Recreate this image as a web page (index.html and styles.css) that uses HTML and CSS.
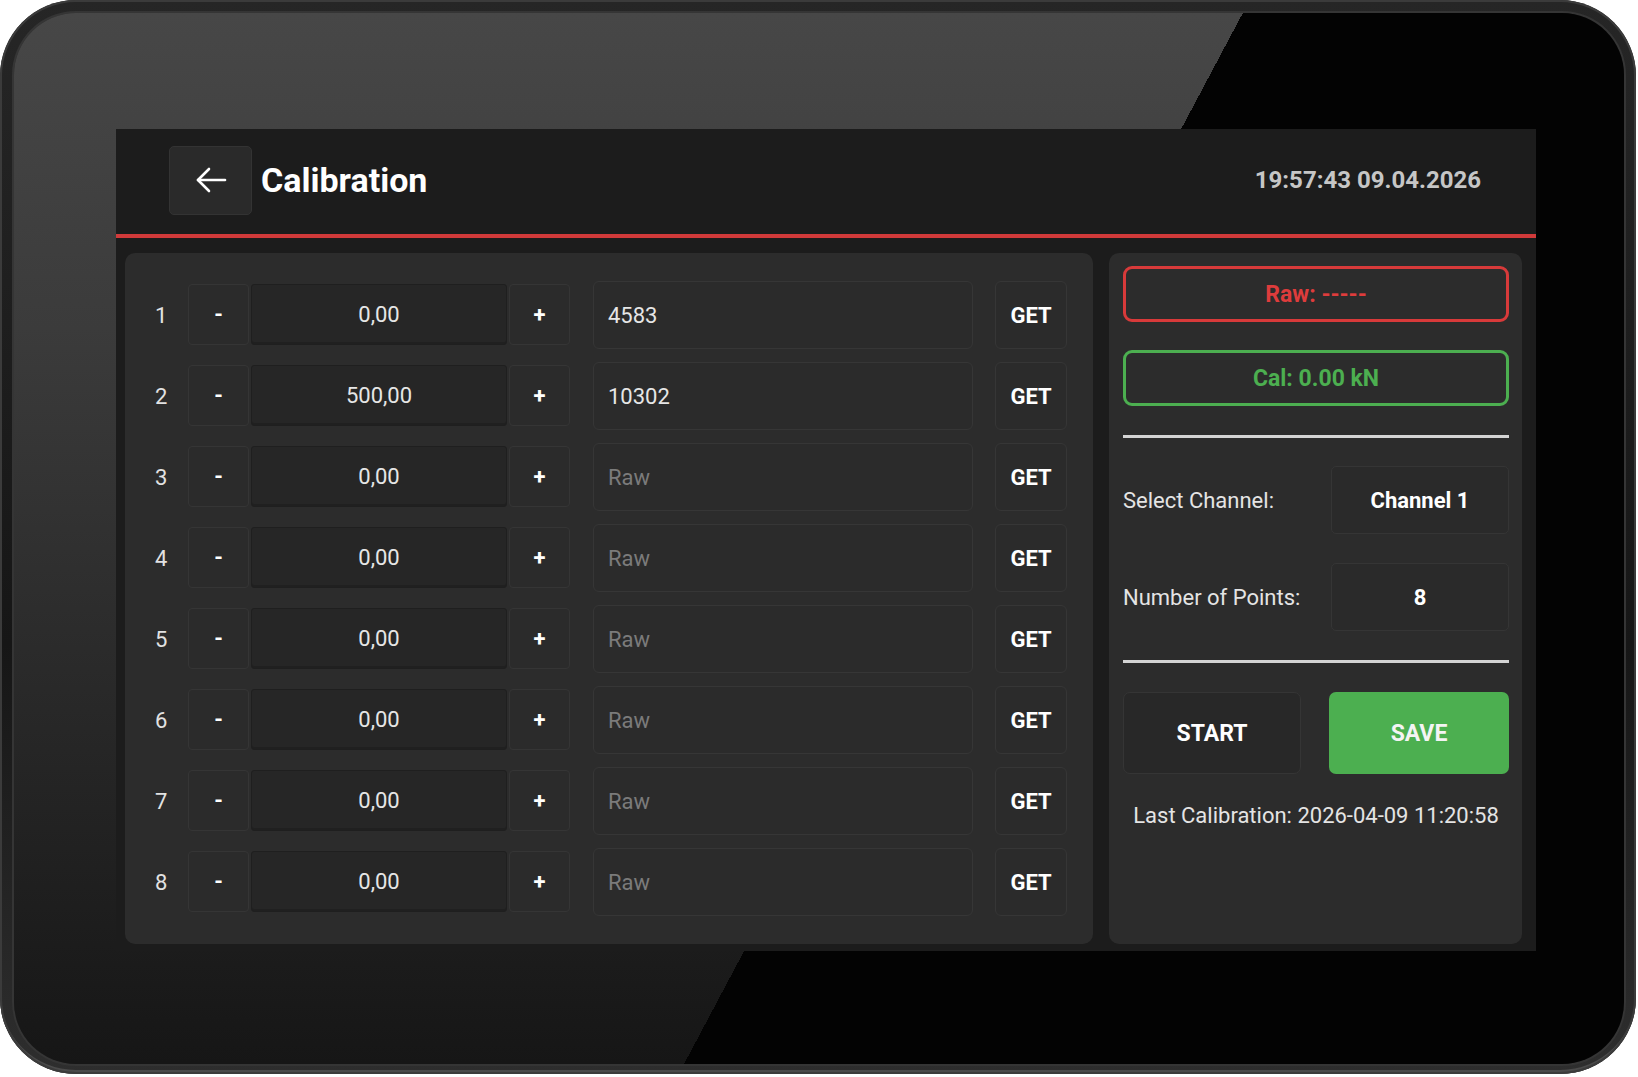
FILE: index.html
```html
<!DOCTYPE html>
<html lang="en">
<head>
<meta charset="utf-8">
<title>Calibration</title>
<link rel="stylesheet" href="styles.css">
</head>
<body>
<div class="device">
  <div class="glass">
    <div class="app">
      <header class="topbar">
        <button class="back" aria-label="Back">
          <svg width="32" height="26" viewBox="0 0 32 26" fill="none" stroke="#ffffff" stroke-width="2.6" stroke-linecap="round" stroke-linejoin="round">
            <path d="M30 13H3"/>
            <path d="M14 2L3 13L14 24"/>
          </svg>
        </button>
        <h1 class="title">Calibration</h1>
        <div class="clock">19:57:43 09.04.2026</div>
      </header>
      <main class="content">
        <section class="points">
          <div class="row"><span class="idx">1</span><div class="stepper"><button class="step">-</button><div class="value">0,00</div><button class="step">+</button></div><div class="raw">4583</div><button class="get">GET</button></div>
          <div class="row"><span class="idx">2</span><div class="stepper"><button class="step">-</button><div class="value">500,00</div><button class="step">+</button></div><div class="raw">10302</div><button class="get">GET</button></div>
          <div class="row"><span class="idx">3</span><div class="stepper"><button class="step">-</button><div class="value">0,00</div><button class="step">+</button></div><div class="raw empty">Raw</div><button class="get">GET</button></div>
          <div class="row"><span class="idx">4</span><div class="stepper"><button class="step">-</button><div class="value">0,00</div><button class="step">+</button></div><div class="raw empty">Raw</div><button class="get">GET</button></div>
          <div class="row"><span class="idx">5</span><div class="stepper"><button class="step">-</button><div class="value">0,00</div><button class="step">+</button></div><div class="raw empty">Raw</div><button class="get">GET</button></div>
          <div class="row"><span class="idx">6</span><div class="stepper"><button class="step">-</button><div class="value">0,00</div><button class="step">+</button></div><div class="raw empty">Raw</div><button class="get">GET</button></div>
          <div class="row"><span class="idx">7</span><div class="stepper"><button class="step">-</button><div class="value">0,00</div><button class="step">+</button></div><div class="raw empty">Raw</div><button class="get">GET</button></div>
          <div class="row"><span class="idx">8</span><div class="stepper"><button class="step">-</button><div class="value">0,00</div><button class="step">+</button></div><div class="raw empty">Raw</div><button class="get">GET</button></div>
        </section>
        <aside class="side">
          <div class="readout readout-raw">Raw: -----</div>
          <div class="readout readout-cal">Cal: 0.00 kN</div>
          <hr class="sep sep-first">
          <div class="setting setting-first">
            <span class="label">Select Channel:</span>
            <div class="pick">Channel 1</div>
          </div>
          <div class="setting">
            <span class="label">Number of Points:</span>
            <div class="pick">8</div>
          </div>
          <hr class="sep">
          <div class="actions">
            <button class="action start">START</button>
            <button class="action save">SAVE</button>
          </div>
          <div class="last">Last Calibration: 2026-04-09 11:20:58</div>
        </aside>
      </main>
    </div>
  </div>
</div>
</body>
</html>
```

FILE: styles.css
```css
* {
  box-sizing: border-box;
}

html, body {
  margin: 0;
  padding: 0;
  background: #ffffff;
}

body {
  width: 1638px;
  height: 1077px;
  overflow: hidden;
  font-family: Roboto, "Liberation Sans", Arial, sans-serif;
}

button {
  font-family: inherit;
  padding: 0;
  margin: 0;
  cursor: pointer;
}

.device {
  width: 1636px;
  height: 1074px;
  border-radius: 76px;
  padding: 13px 12px 10px 14px;
  background: linear-gradient(to bottom, #262626 0%, #161616 60%, #2e2e2e 100%);
  box-shadow: inset 0 0 0 2px #3b3b3b, inset 0 -4px 0 #4a4a4a;
}

.glass {
  width: 100%;
  height: 100%;
  border-radius: 62px;
  padding: 116px 0 0 102px;
  background:
    linear-gradient(118deg, rgba(0,0,0,0) 1085px, #030303 1085px),
    linear-gradient(to bottom, #474747 0%, #3b3b3b 30%, #262626 70%, #161616 100%);
  box-shadow: 0 0 0 2px #353535;
}

.app {
  width: 1420px;
  height: 822px;
  background: #1c1c1c;
  display: flex;
  flex-direction: column;
}

/* header */
.topbar {
  height: 109px;
  flex: none;
  display: flex;
  align-items: center;
  padding: 0 55px 3px 53px;
  border-bottom: 4px solid #d13a3a;
}

.back {
  width: 83px;
  height: 69px;
  border-radius: 5px;
  background: #2a2a2a;
  border: 1px solid #333333;
  display: flex;
  align-items: center;
  justify-content: center;
}

.title {
  margin: 0 0 0 9px;
  font-size: 34px;
  font-weight: 700;
  color: #ffffff;
  letter-spacing: 0;
}

.clock {
  margin-left: auto;
  font-size: 24px;
  font-weight: 700;
  color: #c6c6c6;
}

/* body */
.content {
  flex: 1;
  display: flex;
  gap: 16px;
  padding: 15px 14px 7px 9px;
}

.points {
  width: 968px;
  background: #2c2c2c;
  border-radius: 10px;
  display: flex;
  flex-direction: column;
  justify-content: center;
  gap: 13px;
  padding: 0 26px 0 30px;
}

.row {
  height: 68px;
  display: flex;
  align-items: center;
}

.idx {
  width: 33px;
  font-size: 22px;
  color: #e2e2e2;
}

.stepper {
  display: flex;
  gap: 2px;
  height: 61px;
  margin-top: -2px;
}

.step {
  width: 61px;
  height: 100%;
  background: #2b2b2b;
  border: 1px solid #353535;
  border-radius: 4px;
  color: #ffffff;
  font-size: 22px;
  font-weight: 700;
}

.value {
  width: 256px;
  height: 100%;
  background: #262626;
  border: 1px solid #1f1f1f;
  border-radius: 3px;
  box-shadow: inset 0 -2px 0 #202020;
  display: flex;
  align-items: center;
  justify-content: center;
  font-size: 22px;
  color: #e6e6e6;
}

.raw {
  width: 380px;
  height: 68px;
  margin-left: 23px;
  background: #2b2b2b;
  border: 1px solid #363636;
  border-radius: 6px;
  display: flex;
  align-items: center;
  padding-left: 14px;
  font-size: 22px;
  color: #e6e6e6;
}

.raw.empty {
  color: #7b7b7b;
}

.get {
  width: 72px;
  height: 68px;
  margin-left: 22px;
  background: #2b2b2b;
  border: 1px solid #363636;
  border-radius: 6px;
  color: #ffffff;
  font-size: 22px;
  font-weight: 700;
}

/* side panel */
.side {
  width: 413px;
  background: #2c2c2c;
  border-radius: 10px;
  padding: 13px 13px 0 14px;
  display: flex;
  flex-direction: column;
}

.readout {
  height: 56px;
  border: 3px solid;
  border-radius: 9px;
  display: flex;
  align-items: center;
  justify-content: center;
  font-size: 23px;
  font-weight: 700;
}

.readout-raw {
  border-color: #d83a3a;
  color: #de3c3c;
}

.readout-cal {
  margin-top: 28px;
  border-color: #4caf50;
  color: #4caf50;
}

.sep {
  margin: 29px 0 0;
  height: 3px;
  border: none;
  background: #d4d4d4;
}

.setting {
  height: 68px;
  margin-top: 29px;
  display: flex;
  align-items: center;
  justify-content: space-between;
}

.setting-first {
  margin-top: 28px;
}

.label {
  font-size: 22px;
  color: #e4e4e4;
}

.pick {
  width: 178px;
  height: 100%;
  background: #2a2a2a;
  border: 1px solid #353535;
  border-radius: 5px;
  display: flex;
  align-items: center;
  justify-content: center;
  font-size: 22px;
  font-weight: 700;
  color: #ffffff;
}

.actions {
  margin-top: 29px;
  display: flex;
  justify-content: space-between;
  height: 82px;
}

.action {
  width: 178px;
  height: 100%;
  border-radius: 7px;
  font-size: 23px;
  font-weight: 700;
}

.start {
  background: #282828;
  border: 1px solid #353535;
  color: #ffffff;
}

.save {
  width: 180px;
  background: #4caf50;
  border: none;
  color: #f4f4f4;
}

.last {
  margin-top: 29px;
  text-align: center;
  font-size: 22px;
  color: #e4e4e4;
}
```
